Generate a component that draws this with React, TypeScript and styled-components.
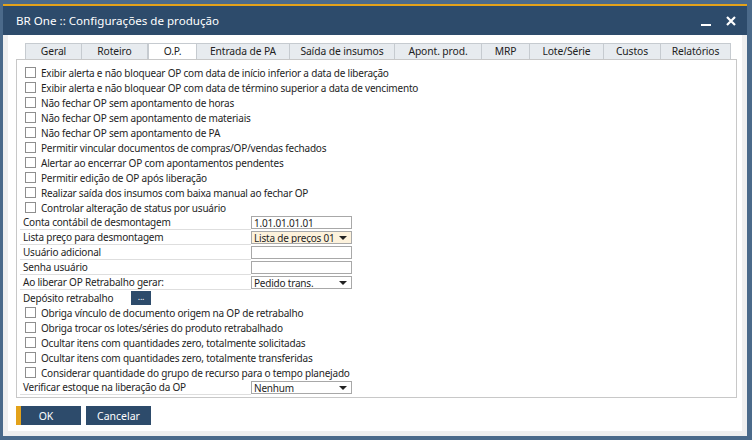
import React from "react";
import styled, { createGlobalStyle } from "styled-components";

const Global = createGlobalStyle`
  html, body { margin: 0; padding: 0; background: #4b6a8a; }
  body { font-family: "Noto Sans", "Liberation Sans", Arial, sans-serif; }
  * { box-sizing: border-box; }
`;

const Frame = styled.div`
  width: 752px;
  height: 440px;
  background: #4b6a8a;
  padding: 4px 5px 4px 3px;
  display: flex;
  flex-direction: column;
`;

const TitleBar = styled.div`
  height: 31px;
  border-top: 2px solid #e3a21a;
  background: #2d4b6b;
  display: flex;
  align-items: center;
  padding: 0 4px 0 13px;
  color: #fff;
  font-family: "Noto Sans", sans-serif;
  font-size: 11.6px;
`;

const Title = styled.div`
  flex: 1;
`;

const WinButton = styled.span`
  width: 25px;
  display: flex;
  justify-content: center;
  align-items: center;
`;

const Body = styled.div`
  flex: 1;
  background: #fff;
  border: 5px solid #efefef;
  border-top: none;
  padding: 8px 5px 0 8px;
  display: flex;
  flex-direction: column;
`;

const Tabs = styled.div`
  display: flex;
  padding-left: 9px;
  height: 16px;
`;

const Tab = styled.div<{ $w: number; $active?: boolean; $first?: boolean }>`
  width: ${(p) => p.$w}px;
  height: 16px;
  background: ${(p) => (p.$active ? "#ffffff" : "#e7ebef")};
  border: 1px solid #c6cbd0;
  border-left: ${(p) => (p.$first || p.$active ? "1px solid #c6cbd0" : "none")};
  border-bottom: none;
  display: flex;
  align-items: center;
  justify-content: center;
  font-family: "Noto Sans", sans-serif;
  font-size: 10.3px;
  letter-spacing: -0.1px;
  color: #222;
  line-height: 1;
`;

const Panel = styled.div`
  width: 721px;
  height: 339px;
  border: 1px solid #c8c8c8;
  padding: 5px 0 0 3px;
  display: flex;
  flex-direction: column;
`;

const CheckRow = styled.label`
  height: 15px;
  display: flex;
  align-items: center;
  padding-left: 5px;
  font-family: "Noto Sans", sans-serif;
  font-size: 10px;
  letter-spacing: -0.2px;
  color: #1e1e1e;
  white-space: nowrap;
`;

const Box = styled.span`
  width: 11px;
  height: 11px;
  border: 1px solid #8e8e8e;
  background: #fff;
  margin-right: 5px;
  flex: none;
`;

const FieldRow = styled.div`
  height: 15px;
  display: flex;
  align-items: center;
  font-family: "Noto Sans", sans-serif;
  font-size: 10px;
  letter-spacing: -0.2px;
  color: #1e1e1e;
  white-space: nowrap;
`;

const FieldLabel = styled.div<{ $line?: boolean }>`
  width: 231px;
  height: 15px;
  padding-left: 3px;
  display: flex;
  align-items: center;
  border-bottom: 1px solid ${(p) => (p.$line ? "#dedede" : "transparent")};
`;

const Input = styled.div<{ $bg?: string }>`
  width: 101px;
  height: 13px;
  border: 1px solid #a8a8a8;
  background: ${(p) => p.$bg || "#fff"};
  display: flex;
  align-items: center;
  padding-left: 2px;
  position: relative;
  font-size: 10px;
  overflow: hidden;
`;

const Arrow = styled.span`
  position: absolute;
  right: 4px;
  top: 4px;
  width: 0;
  height: 0;
  border-left: 4px solid transparent;
  border-right: 4px solid transparent;
  border-top: 4px solid #222;
`;

const DotsButton = styled.div`
  width: 20px;
  height: 14px;
  background: #2d4b6b;
  color: #fff;
  font-size: 9px;
  display: flex;
  align-items: center;
  justify-content: center;
  line-height: 1;
  padding-bottom: 3px;
`;

const DepLabel = styled.div`
  width: 111px;
  padding-left: 3px;
`;

const Footer = styled.div`
  display: flex;
  gap: 5px;
  margin-top: 8px;
`;

const Button = styled.div<{ $primary?: boolean }>`
  width: 65px;
  height: 19px;
  background: #2d4b6b;
  border-left: ${(p) => (p.$primary ? "5px solid #e3a21a" : "none")};
  color: #fff;
  font-family: "Noto Sans", sans-serif;
  font-size: 10.5px;
  display: flex;
  align-items: center;
  justify-content: center;
  padding-right: ${(p) => (p.$primary ? "10px" : "0")};
`;

const tabs: [string, number][] = [
  ["Geral", 57],
  ["Roteiro", 66],
  ["O.P.", 49],
  ["Entrada de PA", 93],
  ["Saída de insumos", 105],
  ["Apont. prod.", 87],
  ["MRP", 48],
  ["Lote/Série", 74],
  ["Custos", 57],
  ["Relatórios", 70],
];

const checks1 = [
  "Exibir alerta e não bloquear OP com data de início inferior a data de liberação",
  "Exibir alerta e não bloquear OP com data de término superior a data de vencimento",
  "Não fechar OP sem apontamento de horas",
  "Não fechar OP sem apontamento de materiais",
  "Não fechar OP sem apontamento de PA",
  "Permitir vincular documentos de compras/OP/vendas fechados",
  "Alertar ao encerrar OP com apontamentos pendentes",
  "Permitir edição de OP após liberação",
  "Realizar saída dos insumos com baixa manual ao fechar OP",
  "Controlar alteração de status por usuário",
];

const checks2 = [
  "Obriga vínculo de documento origem na OP de retrabalho",
  "Obriga trocar os lotes/séries do produto retrabalhado",
  "Ocultar itens com quantidades zero, totalmente solicitadas",
  "Ocultar itens com quantidades zero, totalmente transferidas",
  "Considerar quantidade do grupo de recurso para o tempo planejado",
];

const Check = ({ text }: { text: string }) => (
  <CheckRow>
    <Box />
    {text}
  </CheckRow>
);

const Field = ({
  label,
  value,
  select,
  bg,
}: {
  label: string;
  value?: string;
  select?: boolean;
  bg?: string;
}) => (
  <FieldRow>
    <FieldLabel $line>{label}</FieldLabel>
    <Input $bg={bg}>
      {value}
      {select && <Arrow />}
    </Input>
  </FieldRow>
);

export default function App() {
  return (
    <>
      <Global />
      <Frame>
        <TitleBar>
          <Title>BR One :: Configurações de produção</Title>
          <WinButton>
            <svg width="12" height="12" viewBox="0 0 12 12">
              <rect x="1" y="9" width="10" height="2" fill="#fff" />
            </svg>
          </WinButton>
          <WinButton>
            <svg width="12" height="12" viewBox="0 0 12 12">
              <path d="M2 2 L10 10 M10 2 L2 10" stroke="#fff" strokeWidth="2.2" />
            </svg>
          </WinButton>
        </TitleBar>
        <Body>
          <Tabs>
            {tabs.map(([t, w], i) => (
              <Tab key={t} $w={w} $active={t === "O.P."} $first={i === 0}>
                {t}
              </Tab>
            ))}
          </Tabs>
          <Panel>
            {checks1.map((c) => (
              <Check key={c} text={c} />
            ))}
            <Field label="Conta contábil de desmontagem" value="1.01.01.01.01" />
            <Field label="Lista preço para desmontagem" value="Lista de preços 01" select bg="#fdf2dc" />
            <Field label="Usuário adicional" />
            <Field label="Senha usuário" />
            <Field label="Ao liberar OP Retrabalho gerar:" value="Pedido trans." select />
            <FieldRow>
              <DepLabel>Depósito retrabalho</DepLabel>
              <DotsButton>...</DotsButton>
            </FieldRow>
            {checks2.map((c) => (
              <Check key={c} text={c} />
            ))}
            <Field label="Verificar estoque na liberação da OP" value="Nenhum" select />
          </Panel>
          <Footer>
            <Button $primary>OK</Button>
            <Button>Cancelar</Button>
          </Footer>
        </Body>
      </Frame>
    </>
  );
}
